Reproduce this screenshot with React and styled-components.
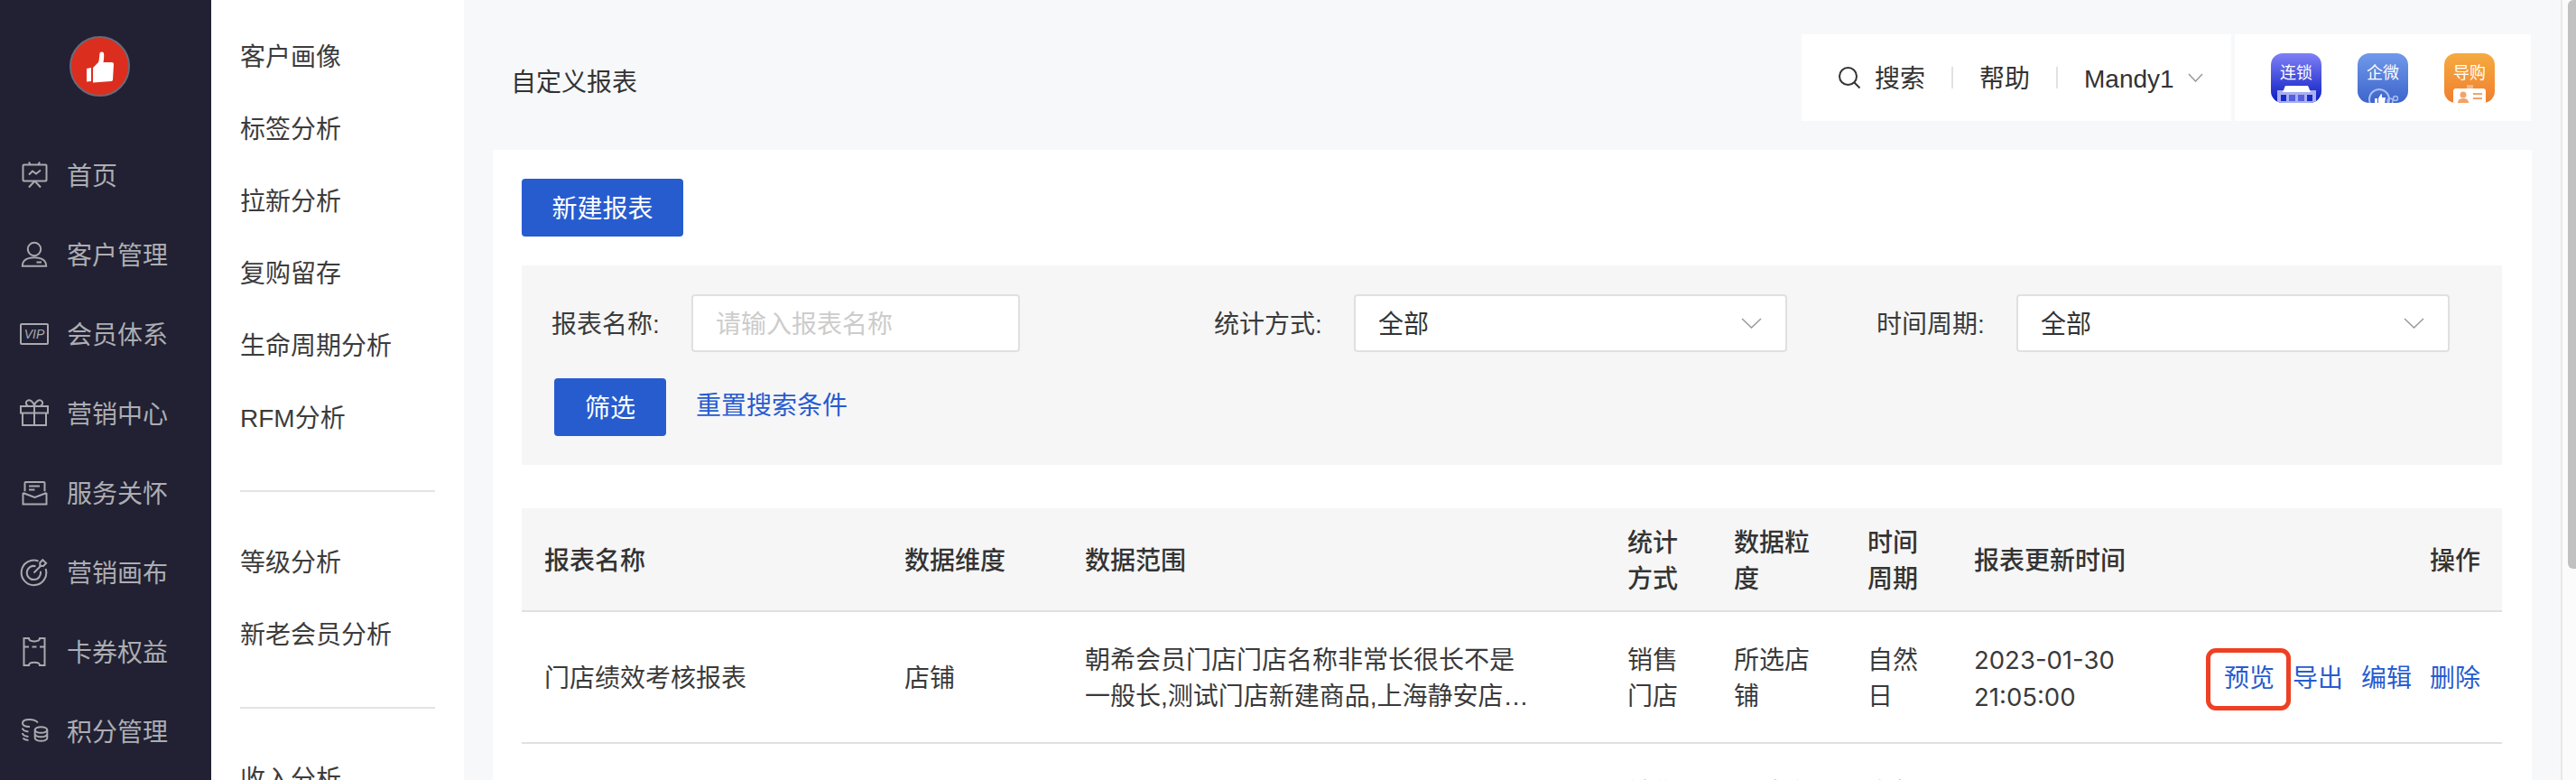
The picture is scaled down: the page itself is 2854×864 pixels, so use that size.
import React from 'react';
import styled, { createGlobalStyle } from 'styled-components';

const GlobalStyle = createGlobalStyle`
  html, body {
    margin: 0;
    padding: 0;
    background: #f7f8fa;
  }
  * {
    box-sizing: border-box;
  }
  body {
    font-family: "Liberation Sans", "Noto Sans CJK SC", sans-serif;
    font-size: 28px;
    color: #333;
  }
`;

const Page = styled.div`
  display: flex;
  width: 2854px;
  height: 864px;
  overflow: hidden;
  background: #f7f8fa;
`;

// single line label, nudged down a little so the CJK glyphs sit on the row centre
const Label = styled.span`
  display: block;
  padding-top: 3px;
  line-height: 1;
`;

const Sidebar = styled.aside`
  flex: none;
  width: 234px;
  background: #212133;
`;

const Logo = styled.div`
  width: 67px;
  height: 67px;
  margin: 40px 0 43px 77px;
  border-radius: 50%;
  background: #dc2e1f;
  border: 2px solid #6a6a78;
  display: flex;

  svg {
    display: block;
  }
`;

const NavItem = styled.div`
  display: flex;
  align-items: center;
  height: 88px;
  padding-left: 22px;
  color: #adadb2;

  svg {
    flex: none;
    margin-right: 20px;
    fill: none;
    stroke: #a9a9ae;
    stroke-width: 2;
  }
`;

const SubMenu = styled.nav`
  flex: none;
  width: 280px;
  padding: 22px 32px 0;
  background: #fff;
`;

const SubItem = styled.div`
  display: flex;
  align-items: center;
  height: 80px;
  color: #3c3c3c;
`;

const SubDivider = styled.div`
  height: 2px;
  margin: 41px 0 37px;
  background: #e3e3e3;
`;

const Main = styled.main`
  flex: none;
  width: 2323px;
  padding: 38px 32px 0 32px;
`;

const HeaderBar = styled.header`
  display: flex;
  align-items: stretch;
  height: 96px;
  margin: 0 1px 32px 0;
`;

const PageTitle = styled.h1`
  flex: 1;
  margin: 0;
  padding: 6px 0 0 20px;
  display: flex;
  align-items: center;
  font-size: 28px;
  font-weight: 400;
  color: #333;
`;

const HeaderTools = styled.div`
  display: flex;
  align-items: center;
  width: 476px;
  margin-right: 4px;
  padding-left: 40px;
  background: #fff;
`;

const SearchIcon = styled.svg`
  margin-right: 15px;
  fill: none;
  stroke: #333;
  stroke-width: 2;
`;

const ToolDivider = styled.span`
  width: 2px;
  height: 24px;
  margin: 0 29px;
  background: #e2e2e2;
`;

const UserChevron = styled.svg`
  margin-left: 15px;
  fill: none;
  stroke: #999;
  stroke-width: 1.5;
`;

const AppSwitcher = styled.div`
  display: flex;
  align-items: center;
  gap: 40px;
  width: 328px;
  padding-left: 40px;
  background: #fff;
`;

const AppTile = styled.div`
  position: relative;
  width: 56px;
  height: 55px;
  padding-top: 11px;
  border-radius: 13px;
  overflow: hidden;
  text-align: center;
  font-size: 18px;
  line-height: 22px;
  color: #fff;
  background: linear-gradient(180deg, ${props => props.$from}, ${props => props.$to});

  svg {
    position: absolute;
    left: 0;
    bottom: 0;
  }
`;

const Card = styled.section`
  height: 800px;
  padding: 32px 33px 0 32px;
  background: #fff;
`;

const PrimaryButton = styled.button`
  display: block;
  width: ${props => props.$width}px;
  height: 64px;
  padding: 3px 0 0;
  border: none;
  border-radius: 4px;
  background: #275ccf;
  color: #fff;
  font: inherit;
  line-height: 1;
`;

const FilterPanel = styled.div`
  margin-top: 32px;
  height: 221px;
  padding: 32px 33px;
  background: #f6f6f6;
`;

const FilterRow = styled.div`
  display: grid;
  grid-template-columns: repeat(3, 734px);
`;

const Field = styled.div`
  display: flex;
  align-items: center;
`;

const FieldLabel = styled.label`
  flex: none;
  width: 155px;
  padding-top: 3px;
  color: #3a3a3a;
  line-height: 1;
`;

const TextBox = styled.div`
  width: 364px;
  height: 64px;
  padding-left: 25px;
  display: flex;
  align-items: center;
  background: #fff;
  border: 2px solid #e0e0e0;
  border-radius: 4px;
  color: #ccc;
`;

const SelectBox = styled.div`
  width: 480px;
  height: 64px;
  padding: 0 26px 0 25px;
  display: flex;
  align-items: center;
  justify-content: space-between;
  background: #fff;
  border: 2px solid #e0e0e0;
  border-radius: 4px;
  color: #333;

  svg {
    fill: none;
    stroke: #999;
    stroke-width: 1.5;
  }
`;

const FilterActions = styled.div`
  display: flex;
  align-items: center;
  gap: 33px;
  margin-top: 29px;
  padding-left: 3px;
`;

const TextLink = styled.a`
  margin-top: -3px;
  color: #275ccf;
  line-height: 1;
`;

const ReportTable = styled.table`
  width: 2194px;
  margin-top: 48px;
  border-collapse: collapse;
  table-layout: fixed;
`;

const HeadCell = styled.th`
  height: 114px;
  padding: 4px ${props => props.$align ? '24px' : '25px'} 0 25px;
  background: #f6f6f6;
  border-bottom: 2px solid #e0e0e0;
  font-weight: 500;
  line-height: 40px;
  color: #333;
  text-align: ${props => props.$align || 'left'};
`;

const BodyCell = styled.td`
  height: 146px;
  padding: ${props => props.$top ? '35px' : '4px'} ${props => props.$end ? '24px' : '25px'} 0 25px;
  border-bottom: 2px solid #e0e0e0;
  line-height: 40px;
  color: #3a3a3a;
  vertical-align: ${props => props.$top ? 'top' : 'middle'};
`;

const RangeText = styled.div`
  width: 492px;
  display: -webkit-box;
  -webkit-box-orient: vertical;
  -webkit-line-clamp: 2;
  overflow: hidden;
`;

const TimeText = styled.span`
  font-family: Inter, "Liberation Sans", sans-serif;
  font-size: 27.5px;
`;

const RowActions = styled.div`
  display: flex;
  justify-content: flex-end;
  gap: 20px;
  white-space: nowrap;
`;

const ActionLink = styled.a`
  position: relative;
  color: #275ccf;
`;

const Highlight = styled.span`
  position: absolute;
  left: -20px;
  right: -18px;
  top: -14px;
  bottom: -15px;
  border: 5px solid #ee4023;
  border-radius: 11px;
`;

const ScrollTrack = styled.div`
  flex: none;
  width: 17px;
  padding-left: 6px;
  background: #fbfbfb;
  border-left: 2px solid #e8e8e8;
`;

const ScrollThumb = styled.div`
  width: 10px;
  height: 630px;
  background: #c1c1c1;
  border-radius: 6px 0 0 6px;
`;

const icons = {
  home: (
    <>
      <rect x="3.5" y="4.5" width="26" height="18" rx="1" />
      <path d="M10 1.5l1.5 3M22 1.5l-1.5 3M16.5 22.5L10 29.5M16.5 22.5l6.5 7M10 15.5l4-4 4 3 5-4" />
    </>
  ),
  user: (
    <>
      <circle cx="16" cy="10" r="7.2" />
      <path d="M2.8 28.8C2.8 22.5 8 19.2 16 19.2S29.2 22.5 29.2 28.8zM18.5 24.6H24" />
    </>
  ),
  vip: (
    <>
      <rect x="1" y="5" width="30" height="22" rx="1" />
      <text x="16" y="21" textAnchor="middle" fontSize="14" fontStyle="italic" fontFamily="Liberation Sans" fill="#a9a9ae" stroke="none">VIP</text>
    </>
  ),
  gift: (
    <>
      <path d="M1 8h30v7.5H1zM3 15.5V29h26V15.5M16 8v21" />
      <path d="M16 7.5C15 2.5 11 .6 8.6 1.6 6 2.8 6.4 6.5 9 7.5M16 7.5C17 2.5 21 .6 23.4 1.6 26 2.8 25.6 6.5 23 7.5" />
    </>
  ),
  mail: (
    <>
      <path d="M3.5 16v12.5h26V16M5.5 14.2V5q0-1 1-1h20q1 0 1 1v9.2M3.5 16l13 5 13-5" />
      <path d="M10 8.5h12M10 12.5h6.5" />
    </>
  ),
  target: (
    <>
      <path d="M20.5 3.5A13.8 13.8 0 1 0 28.6 12M17.5 9.2A7.6 7.6 0 1 0 22.8 14.8M15.5 16.5L24 8" />
      <path d="M22.3 5.2l3-3 3.8 3.6-3 3.2-3.8-.2z" />
    </>
  ),
  ticket: (
    <path d="M4.5 1H10c0 4.5 12 4.5 12 0h5.500v30H22c0-4.500-12-4.500-12 0H4.500zM4.500 10.500H10M13.500 10.500h5M22 10.500h5.500" />
  ),
  coins: (
    <>
      <path d="M20 6.500C18 4 14 3 10.500 3 6 3 3 4.700 3 7c0 2.500 3.500 4 8 4M3 12.500c0 2.300 2.500 3.500 6.500 4M3 18c0 2.300 2.500 3.500 6.500 4M3.500 23.500c1 1.500 3 2.200 6 2.500" />
      <ellipse cx="23.500" cy="14.500" rx="6.800" ry="3.300" />
      <path d="M16.700 14.500v4.500c0 1.800 3 3.300 6.800 3.300s6.800-1.500 6.800-3.300v-4.500M16.700 19v4.500c0 1.800 3 3.300 6.800 3.300s6.800-1.500 6.800-3.300V19" />
    </>
  ),
};

const navItems = [
  ['home', '首页'],
  ['user', '客户管理'],
  ['vip', '会员体系'],
  ['gift', '营销中心'],
  ['mail', '服务关怀'],
  ['target', '营销画布'],
  ['ticket', '卡券权益'],
  ['coins', '积分管理'],
];

const subGroups = [
  ['客户画像', '标签分析', '拉新分析', '复购留存', '生命周期分析', 'RFM分析'],
  ['等级分析', '新老会员分析'],
  ['收入分析'],
];

const columns = [399, 200, 601, 118, 148, 118, 220, 390];

const Chevron = ({ width = 23, height = 12 }) => (
  <svg width={width} height={height} viewBox="0 0 23 12">
    <path d="M1 1l10.500 10L22 1" />
  </svg>
);

const ChainArt = () => (
  <svg width="56" height="20" viewBox="0 0 56 20">
    <rect x="7" y="6" width="43" height="14" fill="#a8aef0" />
    <rect x="11" y="11" width="6" height="7" fill="#1a2bc8" />
    <rect x="20" y="11" width="7" height="7" fill="#5560dc" />
    <rect x="30" y="11" width="7" height="7" fill="#5560dc" />
    <rect x="40" y="11" width="6" height="7" fill="#1a2bc8" />
    <path d="M16 1h25l3 7H13z" fill="#fff" />
  </svg>
);

const WecomArt = () => (
  <svg width="56" height="20" viewBox="0 0 56 20" fill="none">
    <circle cx="24" cy="16" r="11" stroke="#a9bdf0" strokeWidth="2" />
    <path d="M19 15h3v6h-3zM23 15l3-5 1 .500v3.500h4l-1 7h-7z" fill="#fff" />
    <circle cx="36" cy="18" r="3" stroke="#a9bdf0" strokeWidth="1.500" />
    <circle cx="42" cy="15" r="2.500" stroke="#a9bdf0" strokeWidth="1.500" />
  </svg>
);

const GuideArt = () => (
  <svg width="56" height="20" viewBox="0 0 56 20">
    <rect x="25" y="0" width="7" height="6" fill="#f3b886" />
    <rect x="10" y="4" width="36" height="18" rx="3" fill="#fff" />
    <circle cx="21" cy="11" r="3.500" fill="#f2a36a" />
    <path d="M15 20c0-4 3-5 6-5s6 1 6 5z" fill="#f2a36a" />
    <rect x="32" y="9" width="10" height="2" fill="#f2a36a" />
    <rect x="32" y="14" width="10" height="2" fill="#f2a36a" />
  </svg>
);

export default function App() {
  return (
    <Page>
      <GlobalStyle />
      <Sidebar>
        <Logo>
          <svg width="63" height="63" viewBox="0 0 63 63">
            <path d="M17 34l5-1v15l-5 .500z" fill="#fff" />
            <path d="M24 33l6-6c1-2 1-7 1.500-10 .500-2 4-2 4.500 0 .500 3 0 7-.500 10l9.500 0c1.500 0 2 1 2 2l-1 17c0 1.500-1 2-2 2l-20 1.500z" fill="#fff" />
          </svg>
        </Logo>
        {navItems.map(([icon, label]) => (
          <NavItem key={label}>
            <svg width="32" height="32" viewBox="0 0 32 32">{icons[icon]}</svg>
            <Label>{label}</Label>
          </NavItem>
        ))}
      </Sidebar>

      <SubMenu>
        {subGroups.map((group, index) => (
          <React.Fragment key={index}>
            {index > 0 && <SubDivider />}
            {group.map(label => <SubItem key={label}><Label>{label}</Label></SubItem>)}
          </React.Fragment>
        ))}
      </SubMenu>

      <Main>
        <HeaderBar>
          <PageTitle>自定义报表</PageTitle>
          <HeaderTools>
            <SearchIcon width="26" height="26" viewBox="0 0 26 26">
              <circle cx="11.500" cy="11.500" r="9.500" />
              <path d="M18.500 18.500l6 6" />
            </SearchIcon>
            <Label>搜索</Label>
            <ToolDivider />
            <Label>帮助</Label>
            <ToolDivider />
            <Label>Mandy1</Label>
            <UserChevron width="17" height="10" viewBox="0 0 17 10">
              <path d="M1 1l7.500 8L16 1" />
            </UserChevron>
          </HeaderTools>
          <AppSwitcher>
            <AppTile $from="#7f80f6" $to="#0a1cc2">连锁<ChainArt /></AppTile>
            <AppTile $from="#7199ea" $to="#3d64cb">企微<WecomArt /></AppTile>
            <AppTile $from="#f5ab40" $to="#f07e2f">导购<GuideArt /></AppTile>
          </AppSwitcher>
        </HeaderBar>

        <Card>
          <PrimaryButton $width={179}>新建报表</PrimaryButton>

          <FilterPanel>
            <FilterRow>
              <Field>
                <FieldLabel>报表名称:</FieldLabel>
                <TextBox><Label>请输入报表名称</Label></TextBox>
              </Field>
              <Field>
                <FieldLabel>统计方式:</FieldLabel>
                <SelectBox><Label>全部</Label><Chevron /></SelectBox>
              </Field>
              <Field>
                <FieldLabel>时间周期:</FieldLabel>
                <SelectBox><Label>全部</Label><Chevron /></SelectBox>
              </Field>
            </FilterRow>
            <FilterActions>
              <PrimaryButton $width={124}>筛选</PrimaryButton>
              <TextLink>重置搜索条件</TextLink>
            </FilterActions>
          </FilterPanel>

          <ReportTable>
            <colgroup>
              {columns.map((width, index) => <col key={index} style={{ width }} />)}
            </colgroup>
            <thead>
              <tr>
                <HeadCell>报表名称</HeadCell>
                <HeadCell>数据维度</HeadCell>
                <HeadCell>数据范围</HeadCell>
                <HeadCell>统计方式</HeadCell>
                <HeadCell>数据粒度</HeadCell>
                <HeadCell>时间周期</HeadCell>
                <HeadCell>报表更新时间</HeadCell>
                <HeadCell $align="right">操作</HeadCell>
              </tr>
            </thead>
            <tbody>
              <tr>
                <BodyCell>门店绩效考核报表</BodyCell>
                <BodyCell>店铺</BodyCell>
                <BodyCell>
                  <RangeText>朝希会员门店门店名称非常长很长不是一般长,测试门店新建商品,上海静安店,上海徐汇店,上海浦东店</RangeText>
                </BodyCell>
                <BodyCell>销售门店</BodyCell>
                <BodyCell>所选店铺</BodyCell>
                <BodyCell>自然日</BodyCell>
                <BodyCell><TimeText>2023-01-30 21:05:00</TimeText></BodyCell>
                <BodyCell $end>
                  <RowActions>
                    <ActionLink>预览<Highlight /></ActionLink>
                    <ActionLink>导出</ActionLink>
                    <ActionLink>编辑</ActionLink>
                    <ActionLink>删除</ActionLink>
                  </RowActions>
                </BodyCell>
              </tr>
              <tr>
                <BodyCell />
                <BodyCell />
                <BodyCell />
                <BodyCell $top>销售门店</BodyCell>
                <BodyCell $top>所选店铺</BodyCell>
                <BodyCell $top>自然日</BodyCell>
                <BodyCell />
                <BodyCell $end />
              </tr>
            </tbody>
          </ReportTable>
        </Card>
      </Main>

      <ScrollTrack>
        <ScrollThumb />
      </ScrollTrack>
    </Page>
  );
}
